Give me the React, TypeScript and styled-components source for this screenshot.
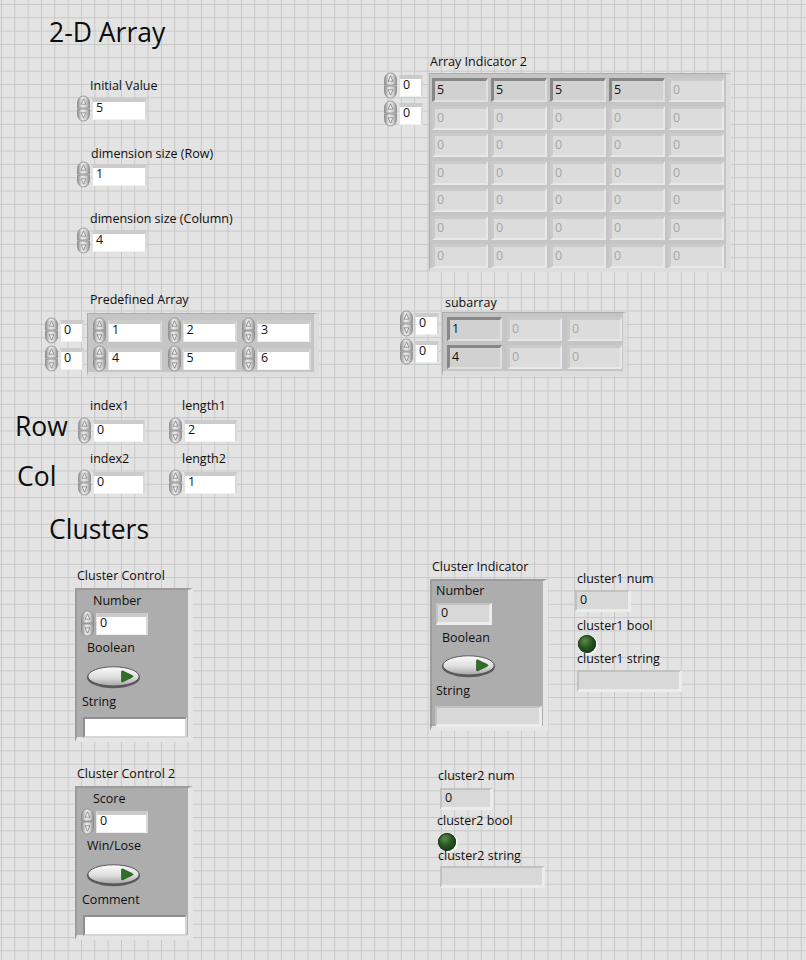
import styled, { createGlobalStyle } from 'styled-components'

const GlobalStyle = createGlobalStyle`
  html, body {
    margin: 0;
    padding: 0;
    background: #e3e3e3;
  }
  body {
    font-family: 'Open Sans', 'Noto Sans', sans-serif;
  }
`

const Panel = styled.div`
  position: relative;
  width: 806px;
  height: 960px;
  overflow: hidden;
  background-color: #e3e3e3;
  background-image:
    linear-gradient(to right, #c7c7c7 1px, transparent 1px),
    linear-gradient(to bottom, #c7c7c7 1px, transparent 1px);
  background-size: 13.333px 13.333px;
  background-position: 1px 4px;
`

const Heading = styled.div<{ $x: number; $y: number }>`
  position: absolute;
  left: ${p => p.$x}px;
  top: ${p => p.$y}px;
  font-size: 26.5px;
  line-height: 32px;
  color: #0d0d0d;
  white-space: nowrap;
`

// one control (label + body) dropped on the panel canvas
const Spot = styled.div<{ $x: number; $y: number; $gap?: number }>`
  position: absolute;
  left: ${p => p.$x}px;
  top: ${p => p.$y}px;
  display: flex;
  flex-direction: column;
  align-items: flex-start;
  gap: ${p => p.$gap ?? 1}px;
`

const Label = styled.div<{ $indent?: number }>`
  margin-left: ${p => p.$indent ?? 0}px;
  font-size: 12.5px;
  line-height: 14px;
  color: #0f0f0f;
  white-space: nowrap;
`

const NumRow = styled.div`
  display: flex;
  align-items: center;
  gap: 1px;
`

const NumBox = styled.div<{ $w: number }>`
  box-sizing: border-box;
  width: ${p => p.$w}px;
  height: 22px;
  padding-left: 3px;
  background: #fff;
  border-style: solid;
  border-width: 4px 2px 1px 1px;
  border-color: #cbcbcb #d9d9d9 #f0f0f0 #e2e2e2;
  font-size: 12.5px;
  line-height: 12px;
  color: #111;
`

const IndBox = styled.div<{ $w: number; $h?: number }>`
  box-sizing: border-box;
  width: ${p => p.$w}px;
  height: ${p => p.$h ?? 22}px;
  padding-left: 3px;
  background: #d8d8d8;
  border-style: solid;
  border-width: 2px 3px 3px 2px;
  border-color: #c2c2c2 #ececec #ececec #c2c2c2;
  font-size: 12.5px;
  line-height: 16px;
  color: #111;
`

const StrBox = styled.div<{ $w: number }>`
  box-sizing: border-box;
  width: ${p => p.$w}px;
  height: 21px;
  background: #fff;
  border-style: solid;
  border-width: 2px;
  border-color: #8f8f8f #d6d6d6 #d6d6d6 #8f8f8f;
`

const SpinSvg = styled.svg`
  display: block;
  flex: none;
`

const Spinner = () => (
  <SpinSvg width="15" height="27" viewBox="0 0 15 27">
    <defs>
      <linearGradient id="spinFill" x1="0" y1="0" x2="1" y2="0">
        <stop offset="0" stopColor="#8e8e8e" />
        <stop offset="0.4" stopColor="#ececec" />
        <stop offset="0.7" stopColor="#d2d2d2" />
        <stop offset="1" stopColor="#8e8e8e" />
      </linearGradient>
    </defs>
    <path d="M1.5 13 V7.5 A6 6.5 0 0 1 13.5 7.5 V13 Z" fill="url(#spinFill)" stroke="#8a8a8a" strokeWidth="0.8" />
    <path d="M1.5 14 V19.5 A6 6.5 0 0 0 13.5 19.5 V14 Z" fill="url(#spinFill)" stroke="#8a8a8a" strokeWidth="0.8" />
    <path d="M7.5 3.8 L5.2 9.2 H9.8 Z" fill="#f4f4f4" stroke="#707070" strokeWidth="0.7" strokeLinejoin="round" />
    <path d="M7.5 23.2 L5.2 17.8 H9.8 Z" fill="#f4f4f4" stroke="#707070" strokeWidth="0.7" strokeLinejoin="round" />
  </SpinSvg>
)

const NumControl = ({ value, width }: { value: string; width: number }) => (
  <NumRow>
    <Spinner />
    <NumBox $w={width}>{value}</NumBox>
  </NumRow>
)

const ToggleSvg = styled.svg`
  display: block;
`

const Toggle = () => (
  <ToggleSvg width="55" height="24" viewBox="0 0 55 24">
    <defs>
      <linearGradient id="btnFill" x1="0" y1="0" x2="0" y2="1">
        <stop offset="0" stopColor="#fbfbfb" />
        <stop offset="0.55" stopColor="#dedede" />
        <stop offset="1" stopColor="#a4a4a4" />
      </linearGradient>
    </defs>
    <ellipse cx="27.5" cy="12.6" rx="26.5" ry="10.6" fill="#5c5c5c" />
    <ellipse cx="27.5" cy="11.4" rx="25.6" ry="9.6" fill="url(#btnFill)" stroke="#4c4c4c" strokeWidth="0.9" />
    <path d="M35.5 6.8 Q35.5 5.3 37 6 L46.4 10.6 Q47.8 11.4 46.4 12.2 L37 16.8 Q35.5 17.5 35.5 16 Z" fill="#2f6f26" stroke="#1f4d1a" strokeWidth="0.6" />
  </ToggleSvg>
)

const Led = styled.div`
  width: 18px;
  height: 18px;
  border-radius: 50%;
  background: radial-gradient(circle at 38% 32%, #5a8a50 0%, #27521f 45%, #123010 100%);
  box-shadow: 1px 1px 0 1px #f6f6f6, inset 0 0 0 1px #1c3a17;
`

const ArrayRow = styled.div<{ $gap: number }>`
  display: flex;
  align-items: flex-start;
  gap: ${p => p.$gap}px;
`

const IndexCol = styled.div<{ $mt: number }>`
  display: flex;
  flex-direction: column;
  gap: 1px;
  margin-top: ${p => p.$mt}px;
`

const ArrayFrame = styled.div<{
  $cols: number
  $cellW: number
  $colGap: number
  $rowGap: number
  $pad: string
  $border: string
}>`
  box-sizing: border-box;
  display: grid;
  grid-template-columns: repeat(${p => p.$cols}, ${p => p.$cellW}px);
  column-gap: ${p => p.$colGap}px;
  row-gap: ${p => p.$rowGap}px;
  padding: ${p => p.$pad};
  background: #c5c5c5;
  border-style: solid;
  border-width: ${p => p.$border};
  border-color: #acacac #dddddd #dddddd #acacac;
`

const Cell = styled.div<{ $on?: boolean }>`
  box-sizing: border-box;
  height: 24px;
  padding-left: 2px;
  border-style: solid;
  border-width: 3px 2px 2px 3px;
  border-color: ${p => (p.$on ? '#878787 #e0e0e0 #e0e0e0 #878787' : '#cacaca #e8e8e8 #e8e8e8 #cacaca')};
  background: ${p => (p.$on ? '#d1d1d1' : '#dcdcdc')};
  color: ${p => (p.$on ? '#111' : '#a6a6a6')};
  font-size: 12.5px;
  line-height: 18px;
`

const ClusterFrame = styled.div<{ $h: number }>`
  box-sizing: border-box;
  width: 118px;
  height: ${p => p.$h}px;
  display: flex;
  flex-direction: column;
  align-items: flex-start;
  background: #adadad;
  border-style: solid;
  border-width: 2px 5px 5px 2px;
  border-color: #9c9c9c #e5e5e5 #e5e5e5 #9c9c9c;
`

const Slot = styled.div<{ $indent: number; $mt: number }>`
  display: flex;
  margin-left: ${p => p.$indent}px;
  margin-top: ${p => p.$mt}px;
`

const ControlCluster = ({ title, num, bool, str, x, y }: {
  title: string; num: string; bool: string; str: string; x: number; y: number
}) => (
  <Spot $x={x} $y={y} $gap={5}>
    <Label $indent={2}>{title}</Label>
    <ClusterFrame $h={154}>
      <Slot $indent={16} $mt={4}><Label>{num}</Label></Slot>
      <Slot $indent={3} $mt={2}><NumControl value="0" width={52} /></Slot>
      <Slot $indent={10} $mt={4}><Label>{bool}</Label></Slot>
      <Slot $indent={9} $mt={10}><Toggle /></Slot>
      <Slot $indent={5} $mt={6}><Label>{str}</Label></Slot>
      <Slot $indent={6} $mt={8}><StrBox $w={104} /></Slot>
    </ClusterFrame>
  </Spot>
)

const indicatorRows = Array.from({ length: 7 }, (_, r) =>
  Array.from({ length: 5 }, (_, c) => (r === 0 && c < 4 ? '5' : '0'))
)

const App = () => (
  <>
    <GlobalStyle />
    <Panel>
      <Heading $x={49} $y={16}>2-D Array</Heading>

      <Spot $x={76} $y={79} $gap={2}>
        <Label $indent={14}>Initial Value</Label>
        <NumControl value="5" width={55} />
      </Spot>
      <Spot $x={76} $y={147} $gap={0}>
        <Label $indent={15}>dimension size (Row)</Label>
        <NumControl value="1" width={55} />
      </Spot>
      <Spot $x={76} $y={212} $gap={1}>
        <Label $indent={14}>dimension size (Column)</Label>
        <NumControl value="4" width={55} />
      </Spot>

      <Spot $x={383} $y={55} $gap={4}>
        <Label $indent={47}>Array Indicator 2</Label>
        <ArrayRow $gap={6}>
          <IndexCol $mt={-1}>
            <NumControl value="0" width={24} />
            <NumControl value="0" width={24} />
          </IndexCol>
          <ArrayFrame $cols={5} $cellW={56} $colGap={3} $rowGap={3.6} $pad="4px 2px 0 2px" $border="1px 5px 4px 1px">
            {indicatorRows.flat().map((v, i) => (
              <Cell key={i} $on={v === '5'}>{v}</Cell>
            ))}
          </ArrayFrame>
        </ArrayRow>
      </Spot>

      <Spot $x={44} $y={293} $gap={6}>
        <Label $indent={46}>Predefined Array</Label>
        <ArrayRow $gap={3}>
          <IndexCol $mt={4}>
            <NumControl value="0" width={24} />
            <NumControl value="0" width={24} />
          </IndexCol>
          <ArrayFrame $cols={3} $cellW={70} $colGap={4.5} $rowGap={1} $pad="3px 3px 0 4px" $border="1px 5px 4px 1px">
            {['1', '2', '3', '4', '5', '6'].map(v => (
              <NumControl key={v} value={v} width={55} />
            ))}
          </ArrayFrame>
        </ArrayRow>
      </Spot>

      <Spot $x={399} $y={296} $gap={2}>
        <Label $indent={46}>subarray</Label>
        <ArrayRow $gap={3}>
          <IndexCol $mt={-2}>
            <NumControl value="0" width={24} />
            <NumControl value="0" width={24} />
          </IndexCol>
          <ArrayFrame $cols={3} $cellW={55} $colGap={5} $rowGap={4} $pad="4px 1px 2px 4px" $border="1px 3px 5px 1px">
            <Cell $on>1</Cell>
            <Cell>0</Cell>
            <Cell>0</Cell>
            <Cell $on>4</Cell>
            <Cell>0</Cell>
            <Cell>0</Cell>
          </ArrayFrame>
        </ArrayRow>
      </Spot>

      <Heading $x={15} $y={410}>Row</Heading>
      <Heading $x={17} $y={460}>Col</Heading>

      <Spot $x={77} $y={399} $gap={4}>
        <Label $indent={13}>index1</Label>
        <NumControl value="0" width={52} />
      </Spot>
      <Spot $x={168} $y={399} $gap={4}>
        <Label $indent={14}>length1</Label>
        <NumControl value="2" width={53} />
      </Spot>
      <Spot $x={77} $y={452} $gap={3}>
        <Label $indent={13}>index2</Label>
        <NumControl value="0" width={52} />
      </Spot>
      <Spot $x={168} $y={452} $gap={3}>
        <Label $indent={14}>length2</Label>
        <NumControl value="1" width={53} />
      </Spot>

      <Heading $x={49} $y={513}>Clusters</Heading>

      <ControlCluster x={75} y={569} title="Cluster Control" num="Number" bool="Boolean" str="String" />
      <ControlCluster x={75} y={767} title="Cluster Control 2" num="Score" bool="Win/Lose" str="Comment" />

      <Spot $x={430} $y={560} $gap={5}>
        <Label $indent={2}>Cluster Indicator</Label>
        <ClusterFrame $h={152}>
          <Slot $indent={4} $mt={3}><Label>Number</Label></Slot>
          <Slot $indent={4} $mt={5}><IndBox $w={56}>0</IndBox></Slot>
          <Slot $indent={10} $mt={6}><Label>Boolean</Label></Slot>
          <Slot $indent={9} $mt={9}><Toggle /></Slot>
          <Slot $indent={4} $mt={6}><Label>String</Label></Slot>
          <Slot $indent={3} $mt={8}><IndBox $w={107} $h={21} /></Slot>
        </ClusterFrame>
      </Spot>

      <Spot $x={575} $y={572} $gap={4}>
        <Label $indent={2}>cluster1 num</Label>
        <IndBox $w={56}>0</IndBox>
      </Spot>
      <Spot $x={577} $y={619} $gap={2}>
        <Label>cluster1 bool</Label>
        <Slot $indent={1} $mt={0}><Led /></Slot>
      </Spot>
      <Spot $x={577} $y={652} $gap={4}>
        <Label>cluster1 string</Label>
        <IndBox $w={105} />
      </Spot>

      <Spot $x={438} $y={769} $gap={5}>
        <Label>cluster2 num</Label>
        <Slot $indent={2} $mt={0}><IndBox $w={53}>0</IndBox></Slot>
      </Spot>
      <Spot $x={437} $y={814} $gap={5}>
        <Label>cluster2 bool</Label>
        <Slot $indent={1} $mt={0}><Led /></Slot>
      </Spot>
      <Spot $x={438} $y={849} $gap={3}>
        <Label>cluster2 string</Label>
        <Slot $indent={2} $mt={0}><IndBox $w={105} /></Slot>
      </Spot>
    </Panel>
  </>
)

export default App
